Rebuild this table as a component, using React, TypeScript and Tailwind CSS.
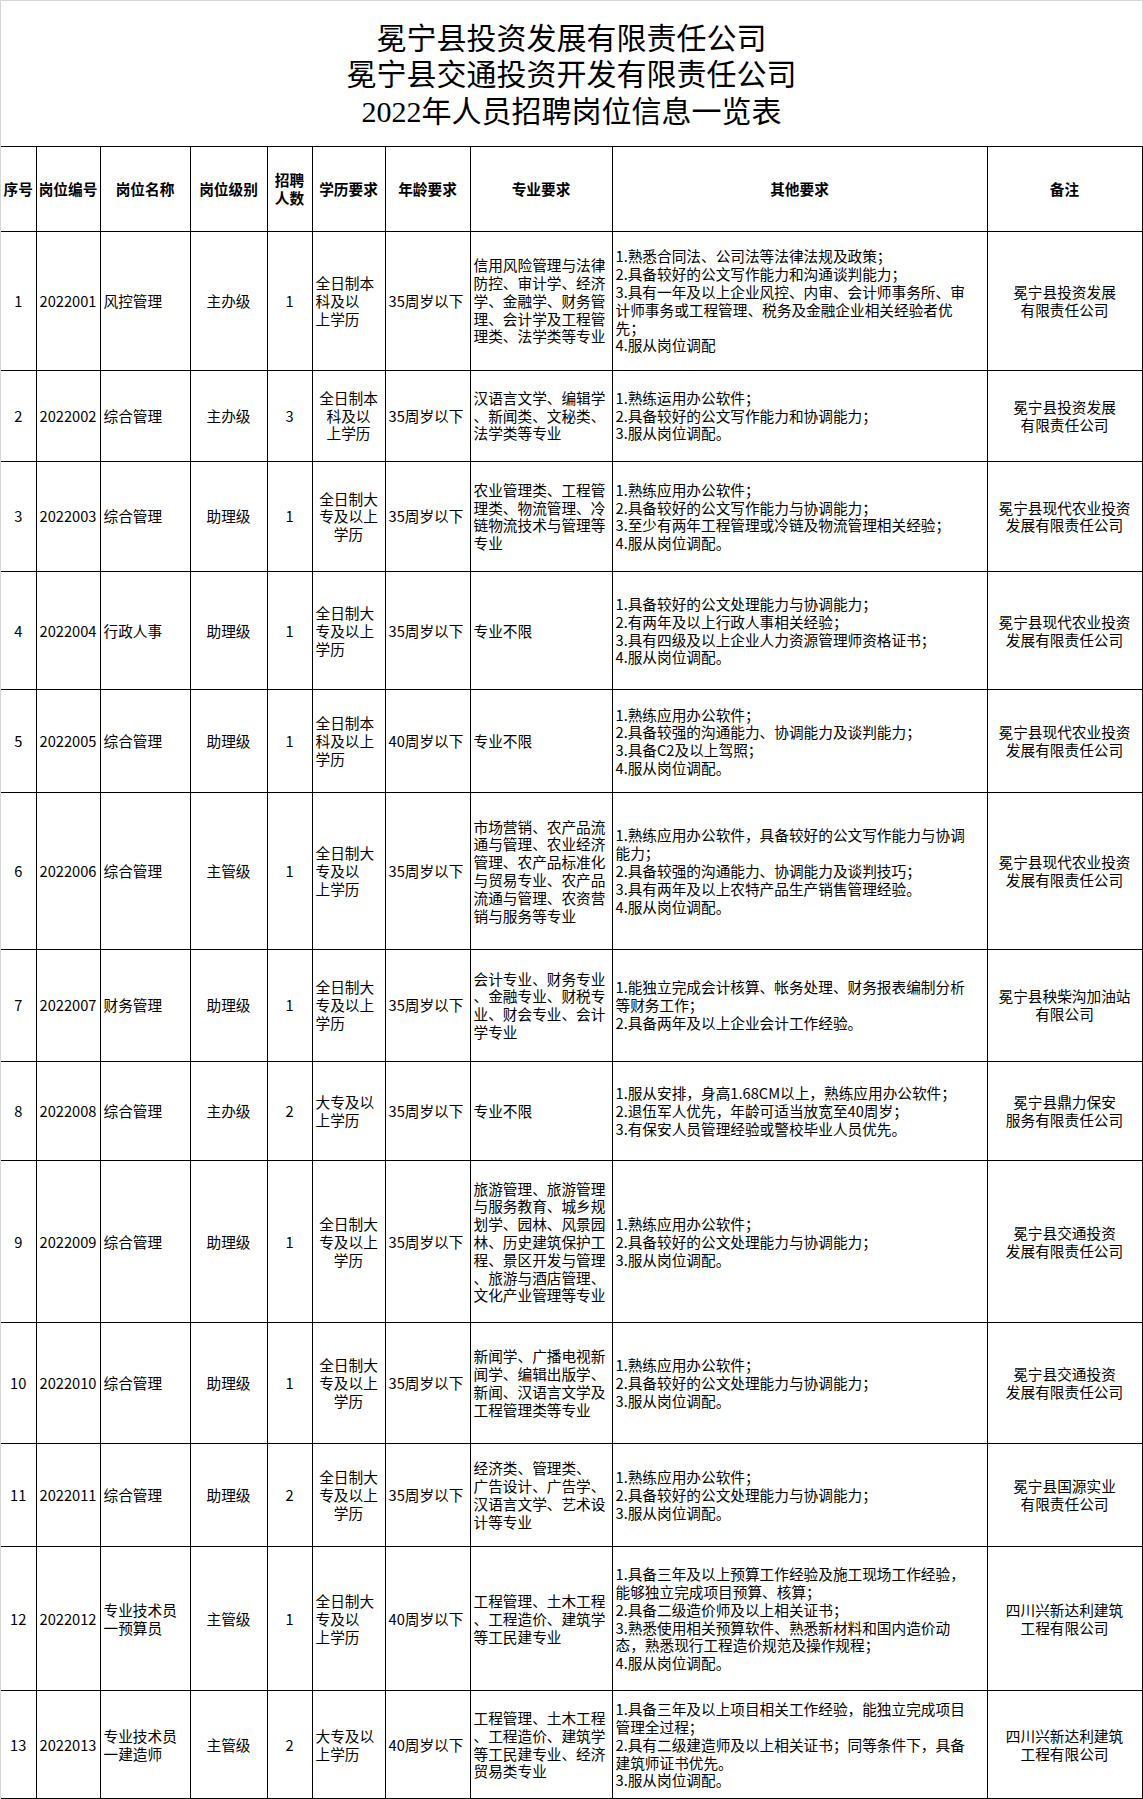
type Row = {
  no: string;
  code: string;
  name: string[];
  level: string;
  count: string;
  edu: string[];
  eduCenter: boolean;
  age: string;
  major: string[];
  other: string[];
  note: string[];
  h: string;
};

const rows: Row[] = [
  {
    no: '1',
    code: '2022001',
    name: ['风控管理'],
    level: '主办级',
    count: '1',
    edu: ['全日制本', '科及以', '上学历'],
    eduCenter: false,
    age: '35周岁以下',
    major: ['信用风险管理与法律', '防控、审计学、经济', '学、金融学、财务管', '理、会计学及工程管', '理类、法学类等专业'],
    other: [
      '1.熟悉合同法、公司法等法律法规及政策；',
      '2.具备较好的公文写作能力和沟通谈判能力；',
      '3.具有一年及以上企业风控、内审、会计师事务所、审',
      '计师事务或工程管理、税务及金融企业相关经验者优',
      '先；',
      '4.服从岗位调配',
    ],
    note: ['冕宁县投资发展', '有限责任公司'],
    h: 'h-[138.5px]',
  },
  {
    no: '2',
    code: '2022002',
    name: ['综合管理'],
    level: '主办级',
    count: '3',
    edu: ['全日制本', '科及以', '上学历'],
    eduCenter: true,
    age: '35周岁以下',
    major: ['汉语言文学、编辑学', '、新闻类、文秘类、', '法学类等专业'],
    other: ['1.熟练运用办公软件；', '2.具备较好的公文写作能力和协调能力；', '3.服从岗位调配。'],
    note: ['冕宁县投资发展', '有限责任公司'],
    h: 'h-[91px]',
  },
  {
    no: '3',
    code: '2022003',
    name: ['综合管理'],
    level: '助理级',
    count: '1',
    edu: ['全日制大', '专及以上', '学历'],
    eduCenter: true,
    age: '35周岁以下',
    major: ['农业管理类、工程管', '理类、物流管理、冷', '链物流技术与管理等', '专业'],
    other: [
      '1.熟练应用办公软件；',
      '2.具备较好的公文写作能力与协调能力；',
      '3.至少有两年工程管理或冷链及物流管理相关经验；',
      '4.服从岗位调配。',
    ],
    note: ['冕宁县现代农业投资', '发展有限责任公司'],
    h: 'h-[110.7px]',
  },
  {
    no: '4',
    code: '2022004',
    name: ['行政人事'],
    level: '助理级',
    count: '1',
    edu: ['全日制大', '专及以上', '学历'],
    eduCenter: false,
    age: '35周岁以下',
    major: ['专业不限'],
    other: [
      '1.具备较好的公文处理能力与协调能力；',
      '2.有两年及以上行政人事相关经验；',
      '3.具有四级及以上企业人力资源管理师资格证书；',
      '4.服从岗位调配。',
    ],
    note: ['冕宁县现代农业投资', '发展有限责任公司'],
    h: 'h-[118px]',
  },
  {
    no: '5',
    code: '2022005',
    name: ['综合管理'],
    level: '助理级',
    count: '1',
    edu: ['全日制本', '科及以上', '学历'],
    eduCenter: false,
    age: '40周岁以下',
    major: ['专业不限'],
    other: [
      '1.熟练应用办公软件；',
      '2.具备较强的沟通能力、协调能力及谈判能力；',
      '3.具备C2及以上驾照；',
      '4.服从岗位调配。',
    ],
    note: ['冕宁县现代农业投资', '发展有限责任公司'],
    h: 'h-[103px]',
  },
  {
    no: '6',
    code: '2022006',
    name: ['综合管理'],
    level: '主管级',
    count: '1',
    edu: ['全日制大', '专及以', '上学历'],
    eduCenter: false,
    age: '35周岁以下',
    major: ['市场营销、农产品流', '通与管理、农业经济', '管理、农产品标准化', '与贸易专业、农产品', '流通与管理、农资营', '销与服务等专业'],
    other: [
      '1.熟练应用办公软件，具备较好的公文写作能力与协调',
      '能力；',
      '2.具备较强的沟通能力、协调能力及谈判技巧；',
      '3.具有两年及以上农特产品生产销售管理经验。',
      '4.服从岗位调配。',
    ],
    note: ['冕宁县现代农业投资', '发展有限责任公司'],
    h: 'h-[156.5px]',
  },
  {
    no: '7',
    code: '2022007',
    name: ['财务管理'],
    level: '助理级',
    count: '1',
    edu: ['全日制大', '专及以上', '学历'],
    eduCenter: false,
    age: '35周岁以下',
    major: ['会计专业、财务专业', '、金融专业、财税专', '业、财会专业、会计', '学专业'],
    other: [
      '1.能独立完成会计核算、帐务处理、财务报表编制分析',
      '等财务工作；',
      '2.具备两年及以上企业会计工作经验。',
    ],
    note: ['冕宁县秧柴沟加油站', '有限公司'],
    h: 'h-[112px]',
  },
  {
    no: '8',
    code: '2022008',
    name: ['综合管理'],
    level: '主办级',
    count: '2',
    edu: ['大专及以', '上学历'],
    eduCenter: false,
    age: '35周岁以下',
    major: ['专业不限'],
    other: [
      '1.服从安排，身高1.68CM以上，熟练应用办公软件；',
      '2.退伍军人优先，年龄可适当放宽至40周岁；',
      '3.有保安人员管理经验或警校毕业人员优先。',
    ],
    note: ['冕宁县鼎力保安', '服务有限责任公司'],
    h: 'h-[99.7px]',
  },
  {
    no: '9',
    code: '2022009',
    name: ['综合管理'],
    level: '助理级',
    count: '1',
    edu: ['全日制大', '专及以上', '学历'],
    eduCenter: true,
    age: '35周岁以下',
    major: [
      '旅游管理、旅游管理',
      '与服务教育、城乡规',
      '划学、园林、风景园',
      '林、历史建筑保护工',
      '程、景区开发与管理',
      '、旅游与酒店管理、',
      '文化产业管理等专业',
    ],
    other: ['1.熟练应用办公软件；', '2.具备较好的公文处理能力与协调能力；', '3.服从岗位调配。'],
    note: ['冕宁县交通投资', '发展有限责任公司'],
    h: 'h-[162px]',
  },
  {
    no: '10',
    code: '2022010',
    name: ['综合管理'],
    level: '助理级',
    count: '1',
    edu: ['全日制大', '专及以上', '学历'],
    eduCenter: true,
    age: '35周岁以下',
    major: ['新闻学、广播电视新', '闻学、编辑出版学、', '新闻、汉语言文学及', '工程管理类等专业'],
    other: ['1.熟练应用办公软件；', '2.具备较好的公文处理能力与协调能力；', '3.服从岗位调配。'],
    note: ['冕宁县交通投资', '发展有限责任公司'],
    h: 'h-[120.3px]',
  },
  {
    no: '11',
    code: '2022011',
    name: ['综合管理'],
    level: '助理级',
    count: '2',
    edu: ['全日制大', '专及以上', '学历'],
    eduCenter: true,
    age: '35周岁以下',
    major: ['经济类、管理类、', '广告设计、广告学、', '汉语言文学、艺术设', '计等专业'],
    other: ['1.熟练应用办公软件；', '2.具备较好的公文处理能力与协调能力；', '3.服从岗位调配。'],
    note: ['冕宁县国源实业', '有限责任公司'],
    h: 'h-[103.7px]',
  },
  {
    no: '12',
    code: '2022012',
    name: ['专业技术员', '一预算员'],
    level: '主管级',
    count: '1',
    edu: ['全日制大', '专及以', '上学历'],
    eduCenter: false,
    age: '40周岁以下',
    major: ['工程管理、土木工程', '、工程造价、建筑学', '等工民建专业'],
    other: [
      '1.具备三年及以上预算工作经验及施工现场工作经验，',
      '能够独立完成项目预算、核算；',
      '2.具备二级造价师及以上相关证书；',
      '3.熟悉使用相关预算软件、熟悉新材料和国内造价动',
      '态，熟悉现行工程造价规范及操作规程；',
      '4.服从岗位调配。',
    ],
    note: ['四川兴新达利建筑', '工程有限公司'],
    h: 'h-[143.5px]',
  },
  {
    no: '13',
    code: '2022013',
    name: ['专业技术员', '一建造师'],
    level: '主管级',
    count: '2',
    edu: ['大专及以', '上学历'],
    eduCenter: false,
    age: '40周岁以下',
    major: ['工程管理、土木工程', '、工程造价、建筑学', '等工民建专业、经济', '贸易类专业'],
    other: [
      '1.具备三年及以上项目相关工作经验，能独立完成项目',
      '管理全过程；',
      '2.具有二级建造师及以上相关证书；同等条件下，具备',
      '建筑师证书优先。',
      '3.服从岗位调配。',
    ],
    note: ['四川兴新达利建筑', '工程有限公司'],
    h: 'h-[108.5px]',
  },
];

function Lines({ lines }: { lines: string[] }) {
  return (
    <>
      {lines.map((l, i) => (
        <div key={i} className="whitespace-nowrap">
          {l}
        </div>
      ))}
    </>
  );
}

const cell = 'border-r border-b border-black align-middle p-0';

export default function App() {
  return (
    <div className="w-[1143px] bg-white border-x border-t border-[#d6d6d6] text-black font-['Noto_Sans_CJK_SC',sans-serif]">
      <div className="h-[145px] flex items-center justify-center pt-[4px] text-center text-[30px] leading-[36.3px] font-['Liberation_Serif','Noto_Sans_CJK_SC',serif]">
        <div>
          <div>冕宁县投资发展有限责任公司</div>
          <div>冕宁县交通投资开发有限责任公司</div>
          <div>2022年人员招聘岗位信息一览表</div>
        </div>
      </div>

      <table className="w-[1141px] table-fixed border-collapse text-[14.67px] leading-[17.8px]">
        <colgroup>
          <col className="w-[35px]" />
          <col className="w-[64px]" />
          <col className="w-[90px]" />
          <col className="w-[77px]" />
          <col className="w-[45px]" />
          <col className="w-[73px]" />
          <col className="w-[85px]" />
          <col className="w-[142px]" />
          <col className="w-[375px]" />
          <col className="w-[155px]" />
        </colgroup>
        <thead>
          <tr className="h-[85px] font-bold text-center">
            <th className={`${cell} border-t`}>序号</th>
            <th className={`${cell} border-t`}>岗位编号</th>
            <th className={`${cell} border-t`}>岗位名称</th>
            <th className={`${cell} border-t`}>岗位级别</th>
            <th className={`${cell} border-t`}>
              <div>招聘</div>
              <div>人数</div>
            </th>
            <th className={`${cell} border-t`}>学历要求</th>
            <th className={`${cell} border-t`}>年龄要求</th>
            <th className={`${cell} border-t`}>专业要求</th>
            <th className={`${cell} border-t`}>其他要求</th>
            <th className={`${cell} border-t`}>备注</th>
          </tr>
        </thead>
        <tbody>
          {rows.map((r) => (
            <tr key={r.no} className={r.h}>
              <td className={`${cell} text-center`}>{r.no}</td>
              <td className={`${cell} text-center`}>{r.code}</td>
              <td className={`${cell} pl-[3px] text-left`}>
                <Lines lines={r.name} />
              </td>
              <td className={`${cell} text-center`}>{r.level}</td>
              <td className={`${cell} text-center`}>{r.count}</td>
              <td className={`${cell} ${r.eduCenter ? 'text-center' : 'pl-[3px] text-left'}`}>
                {r.eduCenter ? (
                  <div className="flex flex-col items-center">
                    <Lines lines={r.edu} />
                  </div>
                ) : (
                  <Lines lines={r.edu} />
                )}
              </td>
              <td className={`${cell} pl-[3px] text-left whitespace-nowrap`}>{r.age}</td>
              <td className={`${cell} pl-[3px] text-left`}>
                <Lines lines={r.major} />
              </td>
              <td className={`${cell} pl-[3px] text-left`}>
                <Lines lines={r.other} />
              </td>
              <td className={`${cell} text-center`}>
                <Lines lines={r.note} />
              </td>
            </tr>
          ))}
        </tbody>
      </table>
    </div>
  );
}
